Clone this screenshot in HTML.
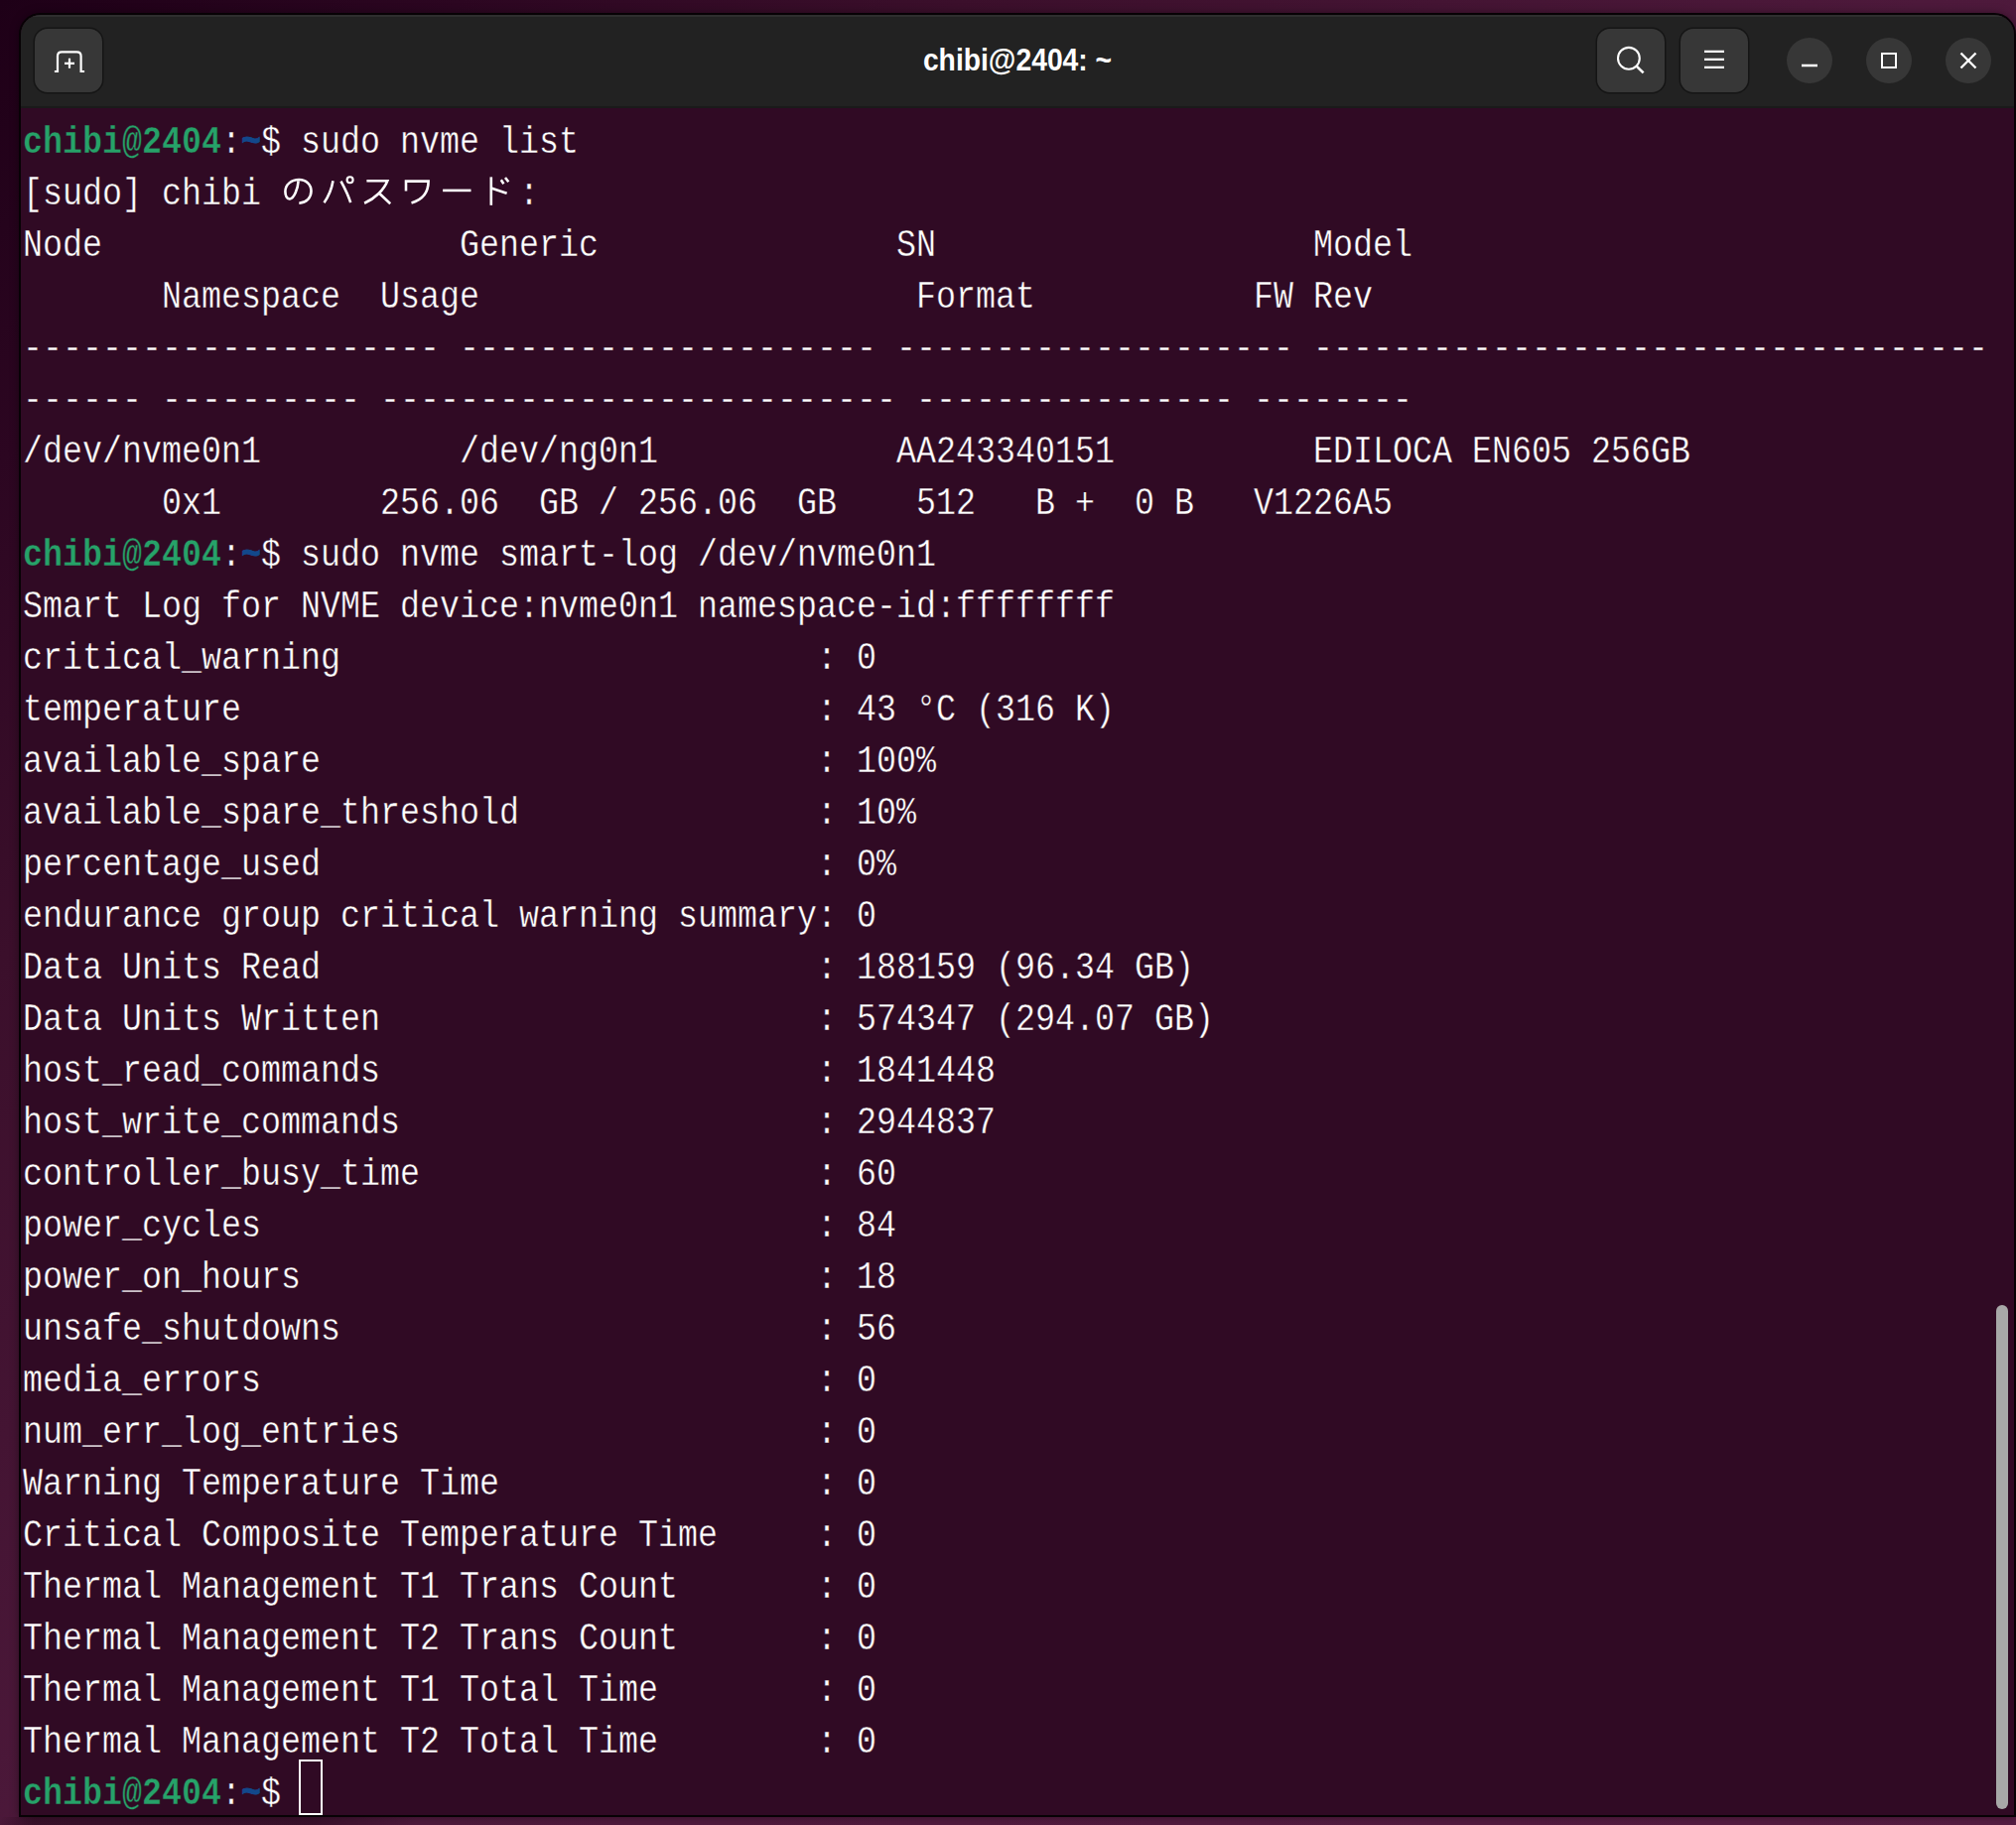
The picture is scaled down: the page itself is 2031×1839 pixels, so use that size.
<!DOCTYPE html>
<html><head><meta charset="utf-8"><style>
html,body{margin:0;padding:0;}
body{width:2031px;height:1839px;overflow:hidden;position:relative;
background:linear-gradient(135deg,#1e0017 0%,#2c0621 12%,#3b0f2b 25%,#4d193b 50%,#561c42 100%);}
.win{position:absolute;left:19px;top:13px;width:2012px;height:1818px;box-sizing:border-box;border:2px solid #070205;border-radius:22px 22px 0 0;background:#300a24;overflow:hidden;box-shadow:0 0 10px rgba(0,0,0,0.35);}
.hb{position:absolute;left:0;top:0;right:0;height:92px;background:#222222;border-bottom:2px solid #1a1a1a;box-shadow:inset 0 2px 0 #2e2e2e;}
.btn{position:absolute;top:14px;width:68px;height:64px;background:#373737;border-radius:13px;box-shadow:0 0 0 1.5px #151515;}
.circ{position:absolute;top:23px;width:46px;height:46px;border-radius:50%;background:#373737;}
.title{position:absolute;left:1004px;top:21.4px;white-space:nowrap;font-family:"Liberation Sans",sans-serif;font-weight:bold;font-size:31px;color:#fff;line-height:50px;transform:translateX(-50%) scaleX(0.912);}
.r{position:absolute;left:23px;height:52px;line-height:52px;font-family:"Liberation Mono",monospace;font-size:39px;color:#fff;white-space:pre;transform:scaleX(0.85456);transform-origin:0 0;-webkit-text-stroke:0.4px #300a24;}
.r b{font-weight:bold;}
.g{color:#26a269;} .bl{color:#12488b;-webkit-text-stroke:1px #12488b;}
.jp{position:absolute;}
.cursor{position:absolute;left:301px;top:1773px;width:24px;height:56px;box-sizing:border-box;border:2px solid #fff;}
.sb{position:absolute;left:2011px;top:1315px;width:12px;height:508px;border-radius:6px;background:#a8a8a8;}
</style></head><body>
<div class="win">
 <div class="hb">
  <div class="btn" style="left:14px"><svg width="68" height="64" viewBox="0 0 68 64"><path d="M19.9,43 H23 V27.5 Q23,23.3 27.2,23.3 H42.4 Q46.6,23.3 46.6,27.5 V43 H50.1" fill="none" stroke="#fff" stroke-width="2.2"/><path d="M35,29.8 V39.8 M30,34.8 H40" stroke="#fff" stroke-width="2.2"/></svg></div>
  <div class="title">chibi@2404: ~</div>
  <div class="btn" style="left:1588px"><svg width="69" height="64" viewBox="0 0 69 64"><circle cx="31.9" cy="29.8" r="10.9" fill="none" stroke="#fff" stroke-width="2.1"/><path d="M39.4,37.4 L46.6,44.4" stroke="#fff" stroke-width="2.7"/></svg></div>
  <div class="btn" style="left:1672px"><svg width="69" height="64" viewBox="0 0 69 64"><path d="M24,22.9 H44 M24,30.9 H44 M24,38.9 H44" stroke="#fff" stroke-width="2.2"/></svg></div>
  <div class="circ" style="left:1779px"><svg width="46" height="46" viewBox="0 0 46 46"><path d="M15,28 H31" stroke="#fff" stroke-width="2.4"/></svg></div>
  <div class="circ" style="left:1859px"><svg width="46" height="46" viewBox="0 0 46 46"><rect x="16" y="16" width="14" height="14" fill="none" stroke="#fff" stroke-width="2"/></svg></div>
  <div class="circ" style="left:1939px"><svg width="46" height="46" viewBox="0 0 46 46"><path d="M15.5,15.5 L30.5,30.5 M30.5,15.5 L15.5,30.5" stroke="#fff" stroke-width="2.4"/></svg></div>
 </div>
</div>
<div class="r" style="top:118px"><b class="g">chibi@2404</b>:<b class="bl">~</b>$ sudo nvme list</div>
<div class="r" style="top:170px">[sudo] chibi             :</div>
<div class="r" style="top:222px">Node                  Generic               SN                   Model</div>
<div class="r" style="top:274px">       Namespace  Usage                      Format           FW Rev</div>
<div class="r" style="top:326px">--------------------- --------------------- -------------------- ----------------------------------</div>
<div class="r" style="top:378px">------ ---------- -------------------------- ---------------- --------</div>
<div class="r" style="top:430px">/dev/nvme0n1          /dev/ng0n1            AA243340151          EDILOCA EN605 256GB</div>
<div class="r" style="top:482px">       0x1        256.06  GB / 256.06  GB    512   B +  0 B   V1226A5</div>
<div class="r" style="top:534px"><b class="g">chibi@2404</b>:<b class="bl">~</b>$ sudo nvme smart-log /dev/nvme0n1</div>
<div class="r" style="top:586px">Smart Log for NVME device:nvme0n1 namespace-id:ffffffff</div>
<div class="r" style="top:638px">critical_warning                        : 0</div>
<div class="r" style="top:690px">temperature                             : 43 °C (316 K)</div>
<div class="r" style="top:742px">available_spare                         : 100%</div>
<div class="r" style="top:794px">available_spare_threshold               : 10%</div>
<div class="r" style="top:846px">percentage_used                         : 0%</div>
<div class="r" style="top:898px">endurance group critical warning summary: 0</div>
<div class="r" style="top:950px">Data Units Read                         : 188159 (96.34 GB)</div>
<div class="r" style="top:1002px">Data Units Written                      : 574347 (294.07 GB)</div>
<div class="r" style="top:1054px">host_read_commands                      : 1841448</div>
<div class="r" style="top:1106px">host_write_commands                     : 2944837</div>
<div class="r" style="top:1158px">controller_busy_time                    : 60</div>
<div class="r" style="top:1210px">power_cycles                            : 84</div>
<div class="r" style="top:1262px">power_on_hours                          : 18</div>
<div class="r" style="top:1314px">unsafe_shutdowns                        : 56</div>
<div class="r" style="top:1366px">media_errors                            : 0</div>
<div class="r" style="top:1418px">num_err_log_entries                     : 0</div>
<div class="r" style="top:1470px">Warning Temperature Time                : 0</div>
<div class="r" style="top:1522px">Critical Composite Temperature Time     : 0</div>
<div class="r" style="top:1574px">Thermal Management T1 Trans Count       : 0</div>
<div class="r" style="top:1626px">Thermal Management T2 Trans Count       : 0</div>
<div class="r" style="top:1678px">Thermal Management T1 Total Time        : 0</div>
<div class="r" style="top:1730px">Thermal Management T2 Total Time        : 0</div>
<div class="r" style="top:1782px"><b class="g">chibi@2404</b>:<b class="bl">~</b>$ </div>
<svg class="jp" style="left:283px;top:164px" width="240" height="52" viewBox="0 0 240 52" fill="none" stroke="#fff" stroke-width="2.6" stroke-linecap="butt" stroke-linejoin="miter">
<g><path d="M17.6,18.3 C17,26 13.5,36 9,36.5 C6,36.8 4.4,33 4.4,29 C4.4,22 10.5,17 18.3,17 C25.5,17 30.5,22 30.5,28.6 C30.5,35 26,40 18.3,40.8"/></g>
<g transform="translate(40,0)"><path d="M12.5,18.3 C11,27 8,34 3.5,40.2"/><path d="M20.5,18.6 C24,25 28,33 30.2,40.2"/><circle cx="29.6" cy="17.3" r="3" stroke-width="2.1"/></g>
<g transform="translate(80,0)"><path d="M6.4,18.3 H27.3 C24,27 15,36 4.1,40.8"/><path d="M19.6,31.2 L30.2,41.2"/></g>
<g transform="translate(120,0)"><path d="M6,28.6 V18.6 H28.6 C28.6,28 24,37 11.5,40.5"/></g>
<g transform="translate(160,0)"><path d="M3.1,27.9 H31.5"/></g>
<g transform="translate(200,0)"><path d="M11.8,14.4 V42.8"/><path d="M11.8,25.4 L27.6,30.8"/><path d="M21.8,17.3 L24.4,21.2"/><path d="M26,15 L29.3,19.2"/></g>
</svg>
<div class="cursor"></div>
<div class="sb"></div>
<div style="position:absolute;left:0;top:1831px;width:700px;height:8px;background:linear-gradient(100deg,rgba(20,0,12,0.0) 0%,rgba(20,0,12,0.35) 5%,rgba(20,0,12,0.35) 45%,rgba(20,0,12,0) 60%);"></div>
</body></html>
